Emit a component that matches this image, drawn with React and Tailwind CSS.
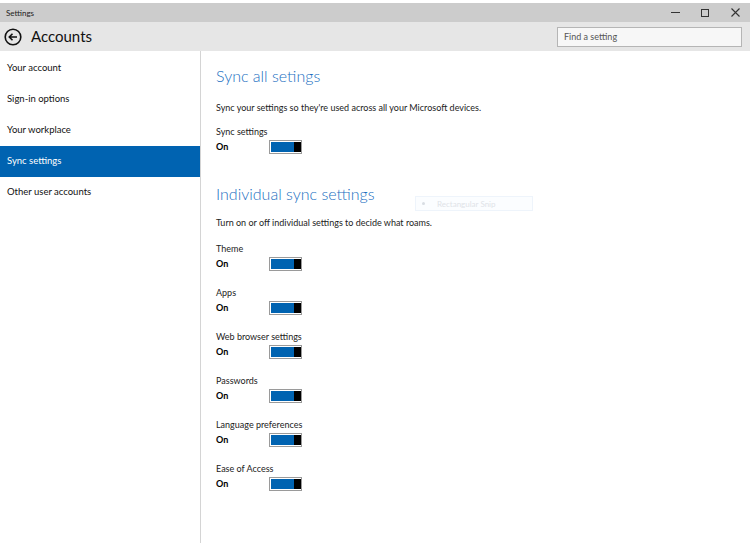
import { useState } from "react";

const navItems = [
    "Your account",
    "Sign-in options",
    "Your workplace",
    "Sync settings",
    "Other user accounts"
];

const syncItems = [
    "Theme",
    "Apps",
    "Web browser settings",
    "Passwords",
    "Language preferences",
    "Ease of Access"
];

const font = { fontFamily: 'Lato, "Noto Sans", sans-serif' };

function Toggle() {
    return (
        <div className="flex h-[14px] w-[33px] items-stretch border border-[#9a9a9a] bg-white p-[1px] pr-0">
            <div className="flex-1 bg-[#0063b1]" />
            <div className="w-[7px] bg-black" />
        </div>
    );
}

function SettingRow({ label }) {
    return (
        <div className="h-[44px]">
            <div className="text-[9px] leading-[12px] text-[#222]">{label}</div>
            <div className="mt-[2px] flex items-center">
                <span className="w-[53px] text-[9px] font-bold leading-[14px] text-black">On</span>
                <Toggle />
            </div>
        </div>
    );
}

export default function App() {
    const [selected, setSelected] = useState("Sync settings");

    return (
        <div className="flex h-[543px] w-[750px] flex-col overflow-hidden bg-white" style={font}>

            {/* Title bar */}
            <div className="h-[3px] bg-white" />
            <div className="flex h-[19px] items-center justify-between bg-[#cccccc] pl-[6px]">
                <span className="text-[8px] text-[#222]">Settings</span>
                <div className="flex h-full items-center">
                    <div className="flex w-[30px] justify-center">
                        <div className="h-[1px] w-[9px] bg-[#333]" />
                    </div>
                    <div className="flex w-[30px] justify-center">
                        <div className="h-[8px] w-[8px] border border-[#333]" />
                    </div>
                    <div className="flex w-[30px] justify-center">
                        <svg width="9" height="9" viewBox="0 0 9 9">
                            <path d="M0.5 0.5 L8.5 8.5 M8.5 0.5 L0.5 8.5" stroke="#333" strokeWidth="1.1" />
                        </svg>
                    </div>
                </div>
            </div>

            {/* Header */}
            <div className="flex h-[29px] items-center justify-between bg-[#e6e6e6] pl-[4px] pr-[8px]">
                <div className="flex items-center gap-[9px]">
                    <svg width="18" height="18" viewBox="0 0 18 18">
                        <circle cx="9" cy="9" r="7.8" fill="none" stroke="#111" strokeWidth="1.6" />
                        <path d="M13 9 H5.5 M8.5 5.8 L5.3 9 L8.5 12.2" fill="none" stroke="#111" strokeWidth="1.6" />
                    </svg>
                    <span className="text-[15px] leading-none text-[#111]">Accounts</span>
                </div>
                <div className="flex h-[20px] w-[185px] items-center border border-[#b5b5b5] bg-[#f7f7f7] px-[6px]">
                    <span className="text-[9px] text-[#555]">Find a setting</span>
                </div>
            </div>

            <div className="flex flex-1">

                {/* Sidebar */}
                <div className="w-[201px] border-r border-[#d4d4d4] pt-[2px]">
                    {navItems.map((item) => (
                        <div
                            key={item}
                            onClick={() => setSelected(item)}
                            className={`flex h-[31px] cursor-pointer items-center pl-[7px] text-[9.5px] ${selected === item ? "bg-[#0063b1] text-white" : "text-[#111]"}`}
                        >
                            {item}
                        </div>
                    ))}
                </div>

                {/* Content */}
                <div className="relative flex-1 pl-[15px] pt-[14px]">

                    <h1 className="text-[16px] font-light leading-[22px] text-[#1a6fbf]">Sync all setings</h1>

                    <p className="mt-[14px] text-[9px] text-[#222]">
                        Sync your settings so they're used across all your Microsoft devices.
                    </p>

                    <div className="mt-[11px]">
                        <SettingRow label="Sync settings" />
                    </div>

                    <h2 className="mt-[13px] text-[16px] font-light leading-[22px] text-[#1a6fbf]">Individual sync settings</h2>

                    <p className="mt-[11px] text-[9px] text-[#222]">
                        Turn on or off individual settings to decide what roams.
                    </p>

                    <div className="mt-[14px]">
                        {syncItems.map((item) => (
                            <SettingRow key={item} label={item} />
                        ))}
                    </div>

                    {/* faint ghost of a snipping tool menu item */}
                    <div className="absolute left-[214px] top-[145px] flex h-[15px] w-[118px] items-center border border-[#eef4fb] bg-[#fbfdff]">
                        <span className="ml-[6px] h-[3px] w-[3px] rounded-full bg-[#d8dde3]" />
                        <span className="ml-[12px] text-[8px] text-[#dfe3e8]">Rectangular Snip</span>
                    </div>
                </div>
            </div>
        </div>
    );
}
